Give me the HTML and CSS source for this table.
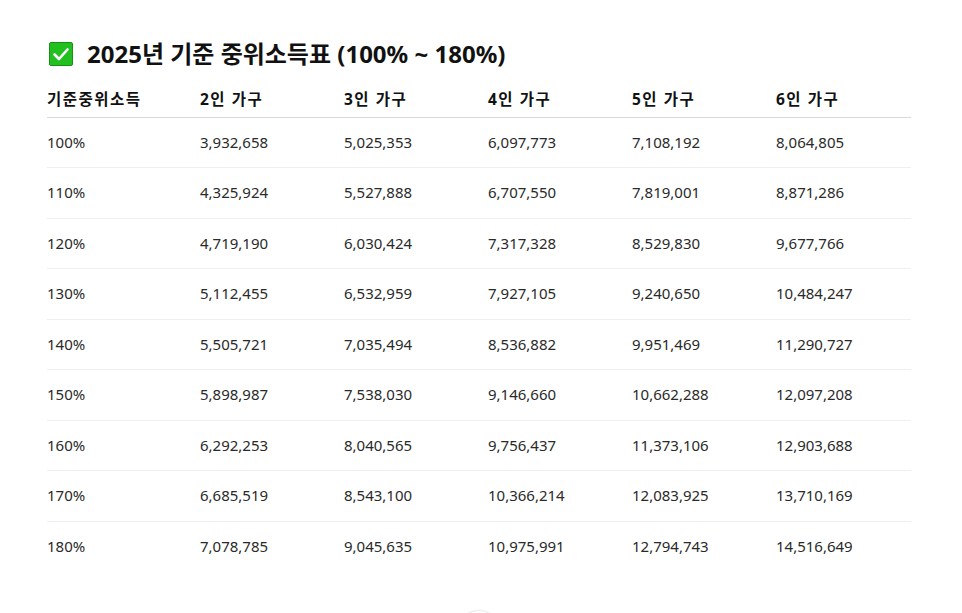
FILE: index.html
```html
<!DOCTYPE html>
<html lang="ko">
<head>
<meta charset="utf-8">
<title>2025년 기준 중위소득표</title>
<link rel="stylesheet" href="styles.css">
</head>
<body>
<main class="page">
  <h2 class="title">
    <svg class="check" width="24" height="24" viewBox="0 0 24 24" aria-hidden="true">
      <rect x="0.5" y="0.5" width="23" height="23" rx="1.5" fill="#22c01f" stroke="#1a8f18"/>
      <path d="M5.5 12.5 L10 17 L18.5 7.5" fill="none" stroke="#fff" stroke-width="2.6" stroke-linecap="round" stroke-linejoin="round"/>
    </svg>
    <span>2025년 기준 중위소득표 (100% ~ 180%)</span>
  </h2>
  <table class="income">
    <colgroup>
      <col class="c1"><col class="cn"><col class="cn"><col class="cn"><col class="cn"><col class="cl">
    </colgroup>
    <thead>
      <tr><th>기준중위소득</th><th>2인 가구</th><th>3인 가구</th><th>4인 가구</th><th>5인 가구</th><th>6인 가구</th></tr>
    </thead>
    <tbody>
      <tr><td>100%</td><td>3,932,658</td><td>5,025,353</td><td>6,097,773</td><td>7,108,192</td><td>8,064,805</td></tr>
      <tr><td>110%</td><td>4,325,924</td><td>5,527,888</td><td>6,707,550</td><td>7,819,001</td><td>8,871,286</td></tr>
      <tr><td>120%</td><td>4,719,190</td><td>6,030,424</td><td>7,317,328</td><td>8,529,830</td><td>9,677,766</td></tr>
      <tr><td>130%</td><td>5,112,455</td><td>6,532,959</td><td>7,927,105</td><td>9,240,650</td><td>10,484,247</td></tr>
      <tr><td>140%</td><td>5,505,721</td><td>7,035,494</td><td>8,536,882</td><td>9,951,469</td><td>11,290,727</td></tr>
      <tr><td>150%</td><td>5,898,987</td><td>7,538,030</td><td>9,146,660</td><td>10,662,288</td><td>12,097,208</td></tr>
      <tr><td>160%</td><td>6,292,253</td><td>8,040,565</td><td>9,756,437</td><td>11,373,106</td><td>12,903,688</td></tr>
      <tr><td>170%</td><td>6,685,519</td><td>8,543,100</td><td>10,366,214</td><td>12,083,925</td><td>13,710,169</td></tr>
      <tr><td>180%</td><td>7,078,785</td><td>9,045,635</td><td>10,975,991</td><td>12,794,743</td><td>14,516,649</td></tr>
    </tbody>
  </table>
</main>
<div class="scroll-dot" aria-hidden="true"></div>
</body>
</html>
```
FILE: styles.css
```css
html, body {
  margin: 0;
  padding: 0;
  background: #fff;
}
body {
  font-family: "Noto Sans", "Noto Sans CJK KR", sans-serif;
  color: #2a2a2a;
  overflow: hidden;
  height: 613px;
  position: relative;
}
.page {
  padding: 38px 51px 0 47px;
}
.title {
  display: flex;
  align-items: center;
  gap: 14px;
  margin: 0 0 12px 2px;
  font-size: 24px;
  font-weight: 700;
  line-height: 32px;
  color: #111;
}
.check {
  flex: none;
  display: block;
}
.income {
  width: 864px;
  border-collapse: collapse;
  table-layout: fixed;
  font-size: 15px;
}
.c1 { width: 153px; }
.cn { width: 144px; }
.cl { width: 135px; }
.income th {
  text-align: left;
  font-weight: 700;
  font-size: 15.5px;
  letter-spacing: 1.5px;
  color: #111;
  padding: 6.5px 0;
  line-height: 21.5px;
  border-bottom: 1px solid #d9d9d9;
}
.income td {
  padding: 14px 0;
  line-height: 21.5px;
  border-bottom: 1px solid #efefef;
}
.income tbody tr:last-child td {
  border-bottom: none;
}
.scroll-dot {
  position: absolute;
  left: 459px;
  top: 611px;
  width: 40px;
  height: 40px;
  border-radius: 50%;
  background: #fff;
  box-shadow: 0 -1px 2px rgba(0,0,0,0.1);
}
```
